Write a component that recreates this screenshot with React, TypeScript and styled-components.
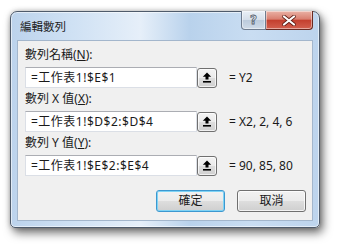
import React from 'react';
import styled, {createGlobalStyle} from 'styled-components';

const Global = createGlobalStyle`
  html, body {
    margin: 0;
    padding: 0;
    background: #ffffff;
  }
  body {
    font-family: 'Noto Sans', 'Noto Sans CJK TC', sans-serif;
    font-size: 12px;
    color: #000;
  }
`;

const Page = styled.div`
  width: 340px;
  height: 248px;
  padding: 11px 0 0 10px;
  box-sizing: border-box;
`;

const Frame = styled.div`
  width: 310px;
  height: 217px;
  box-sizing: border-box;
  border: 1px solid #4f5b6b;
  border-radius: 7px 7px 5px 5px;
  padding: 0 6px 6px 6px;
  display: flex;
  flex-direction: column;
  background: linear-gradient(
    to right,
    #bcd3ec 0%,
    #cfe1f4 20%,
    #e6eff9 42%,
    #b9d2ec 58%,
    #c9ddf2 78%,
    #bdd4ed 100%
  );
  box-shadow: 3px 5px 10px rgba(0, 0, 0, 0.55), 0 0 5px rgba(0, 0, 0, 0.25),
    inset 0 0 0 1px rgba(255, 255, 255, 0.55);
`;

const TitleBar = styled.div`
  height: 28px;
  display: flex;
  align-items: flex-start;
  justify-content: space-between;
  padding-left: 3px;
`;

const TitleText = styled.div`
  line-height: 26px;
  padding-top: 2px;
  font-size: 11.5px;
  color: #1e1e1e;
`;

const CaptionButtons = styled.div`
  display: flex;
  margin-top: -1px;
`;

const CaptionButton = styled.div<{kind: 'help' | 'close'}>`
  height: 19px;
  width: ${(p) => (p.kind === 'help' ? 25 : 47)}px;
  box-sizing: border-box;
  border: 1px solid ${(p) => (p.kind === 'help' ? '#6e7c8f' : '#6a2a22')};
  border-top: none;
  border-radius: ${(p) => (p.kind === 'help' ? '0 0 0 4px' : '0 0 4px 0')};
  ${(p) => (p.kind === 'close' ? 'border-left: none;' : '')}
  display: flex;
  align-items: center;
  justify-content: center;
  background: ${(p) =>
    p.kind === 'help'
      ? 'linear-gradient(#eaf0f7 0%, #d6dfea 48%, #bccbdc 52%, #cfdbe8 100%)'
      : 'linear-gradient(#eab2a6 0%, #d97f70 45%, #c4402f 52%, #d3604f 100%)'};
  box-shadow: inset 0 0 0 1px rgba(255, 255, 255, 0.45);
`;

const HelpGlyph = styled.span`
  font-family: 'DejaVu Sans', sans-serif;
  font-size: 12px;
  font-weight: bold;
  color: #e9eef5;
  -webkit-text-stroke: 0.8px #55606e;
  line-height: 1;
`;

const Client = styled.div`
  flex: 1;
  background: #f0f0f0;
  border: 1px solid #a3b6cc;
  padding: 6px 6px 8px 7px;
  display: flex;
  flex-direction: column;
`;

const Label = styled.div<{first?: boolean}>`
  line-height: 16px;
  height: 16px;
  margin-top: ${(p) => (p.first ? 0 : 3)}px;
  margin-bottom: 4px;
  white-space: nowrap;
  color: #1a1a1a;

  u {
    text-decoration: underline;
    text-underline-offset: 1px;
  }
`;

const FieldRow = styled.div`
  display: flex;
  align-items: center;
  height: 21px;
`;

const Input = styled.div`
  width: 172px;
  height: 21px;
  box-sizing: border-box;
  background: #fff;
  border: 1px solid #dbdfe6;
  border-top-color: #abadb3;
  padding-left: 5px;
  line-height: 19px;
  letter-spacing: 0.5px;
  white-space: nowrap;
  color: #1a1a1a;
`;

const RefButton = styled.div`
  width: 20px;
  height: 20px;
  box-sizing: border-box;
  border: 1px solid #707070;
  border-radius: 3px;
  background: linear-gradient(#f3f3f3 0%, #ebebeb 48%, #dddddd 52%, #d0d0d0 100%);
  box-shadow: inset 0 0 0 1px rgba(255, 255, 255, 0.7);
  display: flex;
  align-items: center;
  justify-content: center;
`;

const Result = styled.div`
  margin-left: 12px;
  white-space: nowrap;
  color: #1a1a1a;
`;

const ButtonRow = styled.div`
  margin-top: 14px;
  display: flex;
  justify-content: flex-end;
  gap: 12px;
`;

const Button = styled.div<{primary?: boolean}>`
  width: 69px;
  height: 22px;
  box-sizing: border-box;
  border: 1px solid ${(p) => (p.primary ? '#3c98d0' : '#707070')};
  border-radius: 3px;
  background: linear-gradient(#f2f2f2 0%, #ebebeb 48%, #dddddd 52%, #cfcfcf 100%);
  box-shadow: inset 0 0 0 1px ${(p) => (p.primary ? '#7fd3f5' : 'rgba(255,255,255,0.75)')};
  display: flex;
  align-items: center;
  justify-content: center;
  line-height: 20px;
  color: #1a1a1a;
`;

const UploadIcon = () => (
  <svg width="10" height="11" viewBox="0 0 10 11">
    <path d="M5 0.5 L9.2 4.8 H6.5 V7.6 H3.5 V4.8 H0.8 Z" fill="#000" />
    <rect x="1" y="9" width="8" height="1.6" fill="#000" />
  </svg>
);

const CloseIcon = () => (
  <svg width="14" height="11" viewBox="0 0 14 11">
    <path
      d="M2 1.5 L12 9.5 M12 1.5 L2 9.5"
      stroke="#5a1a12"
      strokeWidth="3.6"
      strokeLinecap="round"
    />
    <path
      d="M2 1.5 L12 9.5 M12 1.5 L2 9.5"
      stroke="#ffffff"
      strokeWidth="2.2"
      strokeLinecap="round"
    />
  </svg>
);

const fields = [
  {label: <>數列名稱(<u>N</u>):</>, value: '=工作表1!$E$1', result: '= Y2'},
  {label: <>數列 X 值(<u>X</u>):</>, value: '=工作表1!$D$2:$D$4', result: '= X2, 2, 4, 6'},
  {label: <>數列 Y 值(<u>Y</u>):</>, value: '=工作表1!$E$2:$E$4', result: '= 90, 85, 80'},
];

export default function App() {
  return (
    <Page>
      <Global />
      <Frame>
        <TitleBar>
          <TitleText>編輯數列</TitleText>
          <CaptionButtons>
            <CaptionButton kind="help">
              <HelpGlyph>?</HelpGlyph>
            </CaptionButton>
            <CaptionButton kind="close">
              <CloseIcon />
            </CaptionButton>
          </CaptionButtons>
        </TitleBar>
        <Client>
          {fields.map((f, i) => (
            <React.Fragment key={i}>
              <Label first={i === 0}>{f.label}</Label>
              <FieldRow>
                <Input>{f.value}</Input>
                <RefButton>
                  <UploadIcon />
                </RefButton>
                <Result>{f.result}</Result>
              </FieldRow>
            </React.Fragment>
          ))}
          <ButtonRow>
            <Button primary>確定</Button>
            <Button>取消</Button>
          </ButtonRow>
        </Client>
      </Frame>
    </Page>
  );
}
